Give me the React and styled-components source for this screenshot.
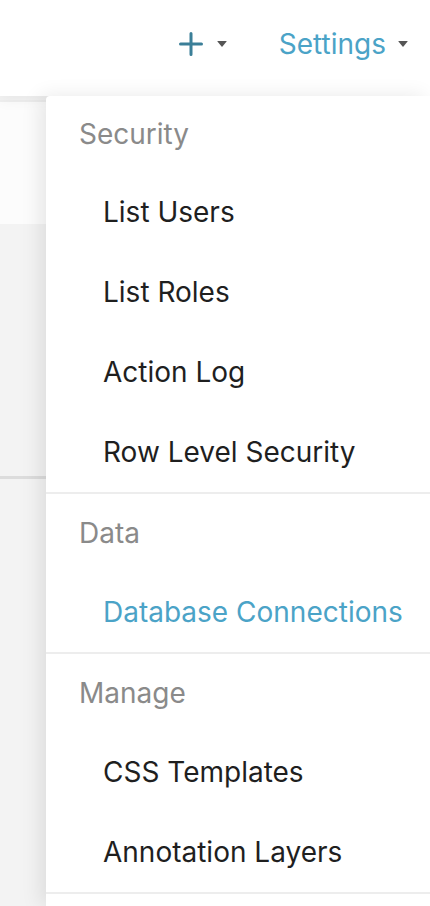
import styled, { createGlobalStyle } from "styled-components";

const GlobalStyle = createGlobalStyle`
  body {
    margin: 0;
    font-family: Inter, "Noto Sans", sans-serif;
    background: #f3f3f3;
  }
`;

const Page = styled.div`
  position: relative;
  width: 430px;
  height: 906px;
  overflow: hidden;
  background: #f3f3f3;
`;
const Header = styled.header`
  height: 96px;
  background: #fff;
  display: flex;
  justify-content: flex-end;
  align-items: center;
  gap: 52px;
  padding-right: 22px;
  padding-bottom: 8px;
  box-sizing: border-box;
  box-shadow: 0 4px 14px rgba(0, 0, 0, 0.05);
  position: relative;
  z-index: 1;
`;
const NavItem = styled.div`
  display: flex;
  align-items: center;
  gap: ${(p) => p.gap || 12}px;
  color: ${(p) => p.color || "#4ba3c7"};
  font-size: 28px;
`;
const Caret = styled.span`
  width: 0;
  height: 0;
  border-left: 5px solid transparent;
  border-right: 5px solid transparent;
  border-top: 6px solid #555;
  border-radius: 1px;
`;
const Card = styled.div`
  margin-top: 4px;
  height: 122px;
  background: #fcfcfc;
  border-top: 2px solid #efefef;
`;
const Rule = styled.div`
  margin-top: 252px;
  height: 3px;
  background: #dcdcdc;
`;
const Menu = styled.div`
  position: absolute;
  top: 96px;
  left: 46px;
  right: 0;
  bottom: 0;
  background: #fff;
  border-top-left-radius: 4px;
  box-shadow: -6px 0 20px rgba(0, 0, 0, 0.09);
  z-index: 2;
`;
const Title = styled.div`
  height: 78px;
  display: flex;
  align-items: center;
  padding-left: 33px;
  color: #8a8a8a;
  font-size: 28px;
`;
const Group = styled.div`
  border-bottom: 2px solid #ededed;

  &:first-child ${Title} {
    height: 76px;
  }
`;
const Item = styled.div`
  height: 80px;
  display: flex;
  align-items: center;
  padding-left: 57px;
  font-size: 28px;
  color: ${(p) => (p.active ? "#4ba3c7" : "#1f1f1f")};
`;

const groups = [
  { title: "Security", items: ["List Users", "List Roles", "Action Log", "Row Level Security"] },
  { title: "Data", items: ["Database Connections"], active: "Database Connections" },
  { title: "Manage", items: ["CSS Templates", "Annotation Layers"] },
];

export default function App() {
  return (
    <Page>
      <GlobalStyle />
      <Header>
        <NavItem color="#3b7f98" gap={14}>
          <svg width="24" height="24" viewBox="0 0 24 24">
            <path d="M12 1.5v21M1.5 12h21" stroke="#3b7f98" strokeWidth="3" strokeLinecap="round" />
          </svg>
          <Caret />
        </NavItem>
        <NavItem>
          Settings
          <Caret />
        </NavItem>
      </Header>
      <Card />
      <Rule />
      <Menu>
        {groups.map((g) => (
          <Group key={g.title}>
            <Title>{g.title}</Title>
            {g.items.map((it) => (
              <Item key={it} active={it === g.active}>
                {it}
              </Item>
            ))}
          </Group>
        ))}
      </Menu>
    </Page>
  );
}
